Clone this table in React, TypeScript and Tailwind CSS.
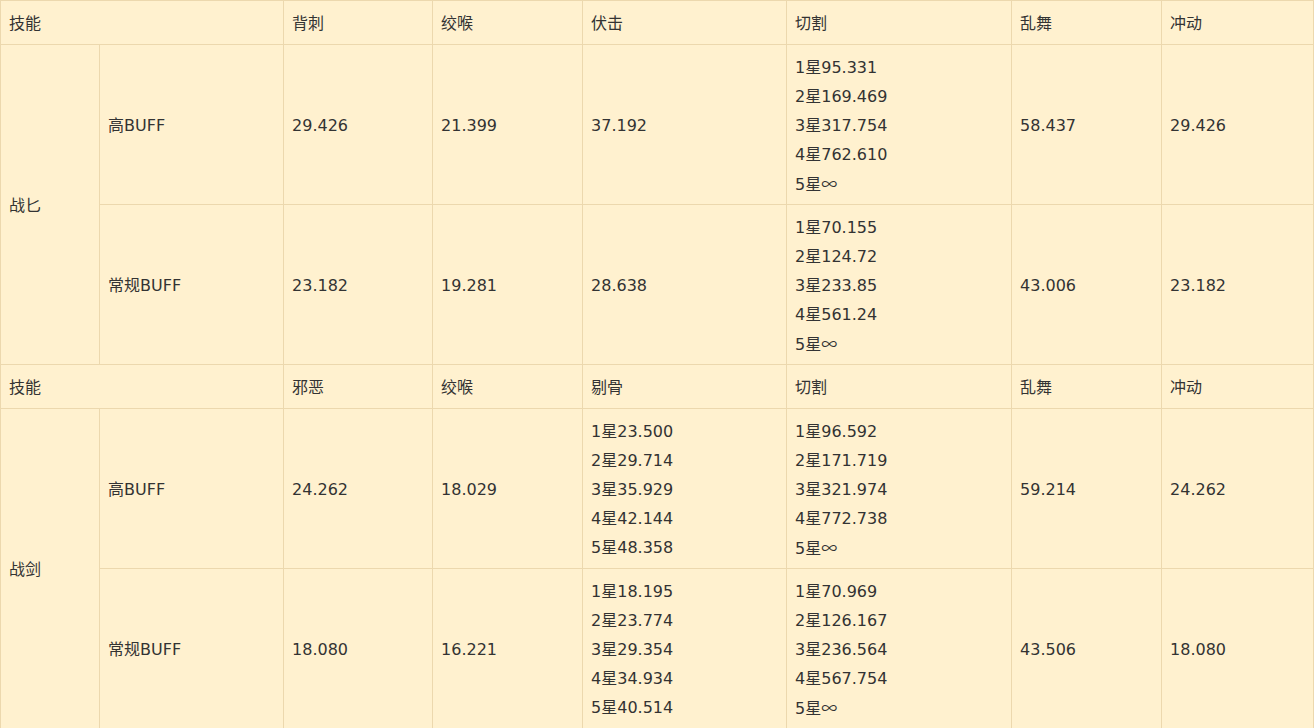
import React from "react";

type Buff = {
  label: string;
  values: (string | string[])[];
};

type Block = {
  weapon: string;
  headers: string[];
  rows: Buff[];
};

const blocks: Block[] = [
  {
    weapon: "战匕",
    headers: ["背刺", "绞喉", "伏击", "切割", "乱舞", "冲动"],
    rows: [
      {
        label: "高BUFF",
        values: [
          "29.426",
          "21.399",
          "37.192",
          ["1星95.331", "2星169.469", "3星317.754", "4星762.610", "5星∞"],
          "58.437",
          "29.426",
        ],
      },
      {
        label: "常规BUFF",
        values: [
          "23.182",
          "19.281",
          "28.638",
          ["1星70.155", "2星124.72", "3星233.85", "4星561.24", "5星∞"],
          "43.006",
          "23.182",
        ],
      },
    ],
  },
  {
    weapon: "战剑",
    headers: ["邪恶", "绞喉", "剔骨", "切割", "乱舞", "冲动"],
    rows: [
      {
        label: "高BUFF",
        values: [
          "24.262",
          "18.029",
          ["1星23.500", "2星29.714", "3星35.929", "4星42.144", "5星48.358"],
          ["1星96.592", "2星171.719", "3星321.974", "4星772.738", "5星∞"],
          "59.214",
          "24.262",
        ],
      },
      {
        label: "常规BUFF",
        values: [
          "18.080",
          "16.221",
          ["1星18.195", "2星23.774", "3星29.354", "4星34.934", "5星40.514"],
          ["1星70.969", "2星126.167", "3星236.564", "4星567.754", "5星∞"],
          "43.506",
          "18.080",
        ],
      },
    ],
  },
];

const cell = "border border-[#ecd8ae] pl-[8px] pr-[8px] pt-[2px] align-middle";

// the ∞ sign is drawn by the CJK font in the original, so it comes out wider
const Line: React.FC<{ text: string }> = ({ text }) => {
  if (!text.endsWith("∞")) return <>{text}</>;
  return (
    <>
      {text.slice(0, -1)}
      <span style={{ fontFamily: '"Noto Sans CJK SC", sans-serif' }}>∞</span>
    </>
  );
};

const Cell: React.FC<{ value: string | string[] }> = ({ value }) => (
  <td className={cell}>
    {Array.isArray(value) ? (
      <div className="flex flex-col">
        {value.map((line) => (
          <div key={line} className="leading-[29px] h-[29px]">
            <Line text={line} />
          </div>
        ))}
      </div>
    ) : (
      value
    )}
  </td>
);

export default function App() {
  return (
    <div className="w-[1314px] h-[728px] overflow-hidden bg-white">
      <table
        className="table-fixed border-collapse w-[1313px] bg-[#fff1cf] text-[#333] text-[16px]"
        style={{ fontFamily: '"DejaVu Sans", "Noto Sans CJK SC", sans-serif' }}
      >
        <colgroup>
          <col className="w-[99px]" />
          <col className="w-[184px]" />
          <col className="w-[149px]" />
          <col className="w-[150px]" />
          <col className="w-[204px]" />
          <col className="w-[225px]" />
          <col className="w-[150px]" />
          <col className="w-[152px]" />
        </colgroup>
        <tbody>
          {blocks.map((b) => (
            <React.Fragment key={b.weapon}>
              <tr className="h-[44px]">
                <td colSpan={2} className={cell}>
                  技能
                </td>
                {b.headers.map((h, i) => (
                  <td key={i} className={cell}>
                    {h}
                  </td>
                ))}
              </tr>
              {b.rows.map((r, ri) => (
                <tr key={r.label} className="h-[160px]">
                  {ri === 0 && (
                    <td rowSpan={b.rows.length} className={cell}>
                      {b.weapon}
                    </td>
                  )}
                  <td className={cell}>{r.label}</td>
                  {r.values.map((v, i) => (
                    <Cell key={i} value={v} />
                  ))}
                </tr>
              ))}
            </React.Fragment>
          ))}
        </tbody>
      </table>
    </div>
  );
}
